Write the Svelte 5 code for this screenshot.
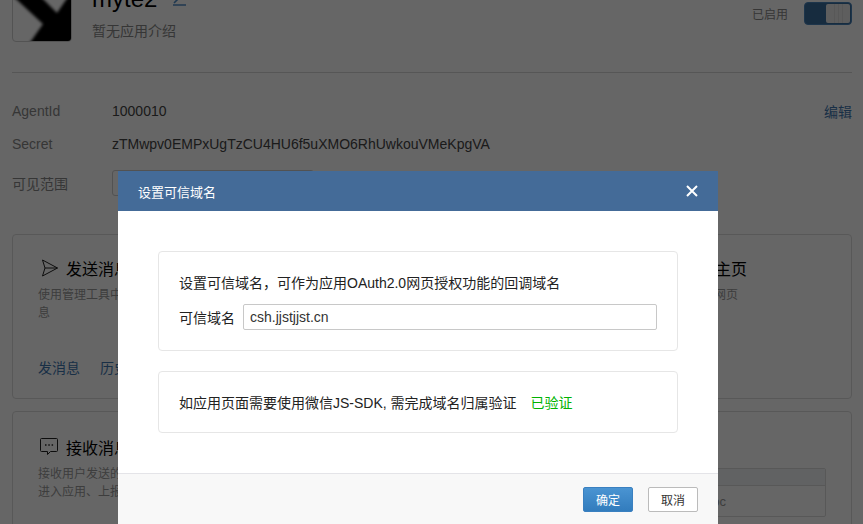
<script>
	const infoRows = [
		{ label: 'AgentId', value: '1000010' },
		{ label: 'Secret', value: 'zTMwpv0EMPxUgTzCU4HU6f5uXMO6RhUwkouVMeKpgVA' }
	];
</script>

<div class="page">
	<header class="app-head">
		<div class="logo">
			<svg viewBox="0 0 60 72" width="60" height="72">
				<defs>
					<filter id="soft"><feGaussianBlur stdDeviation="1.5" /></filter>
				</defs>
				<polygon filter="url(#soft)" points="-3,24 3,28 31,54 17,74 64,74 64,24 58,24 45,43 26,24" fill="#000" />
			</svg>
		</div>
		<div class="app-text">
			<div class="app-name">
				<span>myte2</span>
				<svg class="pen" viewBox="0 0 14 14" width="14" height="14">
					<path d="M0 13h13M12 0L1 11" fill="none" stroke="#4f8cc8" stroke-width="1.6" />
				</svg>
			</div>
			<p class="app-desc">暂无应用介绍</p>
		</div>
		<div class="switch-wrap">
			<span>已启用</span>
			<div class="switch"><i></i></div>
		</div>
	</header>

	<section class="info">
		{#each infoRows as row, i}
			<div class="row">
				<span class="label">{row.label}</span>
				<span class="value">{row.value}</span>
				{#if i === 0}<a class="edit" href="#edit">编辑</a>{/if}
			</div>
		{/each}
		<div class="row range">
			<span class="label">可见范围</span>
			<span class="range-box"></span>
		</div>
	</section>

	<section class="card first">
		<div class="col">
			<h3>
				<svg viewBox="0 0 18 18" width="18" height="18">
					<path d="M2.5 1l15 8-15 8 2.5-8z M5 9h12.5" fill="none" stroke="#222" stroke-width="1" />
				</svg>
				发送消息
			</h3>
			<p>使用管理工具中的消息发送功能向用户发送消<br />息</p>
			<div class="links"><a href="#send">发消息</a><a href="#history">历史消息</a></div>
		</div>
		<div class="col right">
			<h3 class="home">应用主页</h3>
			<p>进入应用时打开网页</p>
		</div>
	</section>

	<section class="card second">
		<div class="col">
			<h3>
				<svg viewBox="0 0 18 18" width="18" height="18">
					<path d="M1.5 0.5h15a1 1 0 0 1 1 1v11a1 1 0 0 1-1 1h-6l-3 3v-3h-6a1 1 0 0 1-1-1v-11a1 1 0 0 1 1-1z" fill="none" stroke="#222" stroke-width="1" />
					<path d="M5 7h1.5M8.3 7h1.5M11.6 7h1.5" stroke="#222" stroke-width="1.5" />
				</svg>
				接收消息
			</h3>
			<p>接收用户发送的消息和事件<br />进入应用、上报地理位置</p>
		</div>
		<div class="col right">
			<div class="mini-table">
				<div class="mini-head"></div>
				<div class="mini-cell">doc</div>
			</div>
		</div>
	</section>
</div>

<div class="mask"></div>

<div class="modal">
	<div class="modal-head">
		<span>设置可信域名</span>
		<svg viewBox="0 0 14 14" width="14" height="14">
			<path d="M2 2l10 10M12 2L2 12" stroke="#fff" stroke-width="2" />
		</svg>
	</div>
	<div class="modal-body">
		<div class="box">
			<p>设置可信域名，可作为应用OAuth2.0网页授权功能的回调域名</p>
			<label>
				<span>可信域名</span>
				<input type="text" value="csh.jjstjjst.cn" />
			</label>
		</div>
		<div class="box verify">
			<span>如应用页面需要使用微信JS-SDK, 需完成域名归属验证</span>
			<em>已验证</em>
		</div>
	</div>
	<div class="modal-foot">
		<button class="primary">确定</button>
		<button>取消</button>
	</div>
</div>

<style>
	:global(body) {
		margin: 0;
		height: 524px;
		overflow: hidden;
		background: #fff;
		font-family: 'Liberation Sans', 'Noto Sans CJK SC', sans-serif;
		font-size: 14px;
	}

	.page {
		height: 524px;
		padding: 0 11px 0 12px;
		box-sizing: border-box;
		overflow: hidden;
	}

	/* Header is scrolled partly out of view */
	.app-head {
		display: flex;
		margin-top: -30px;
		height: 103px;
		box-sizing: border-box;
		border-bottom: 1px solid #d8d8d8;
	}

	.logo {
		width: 60px;
		height: 72px;
		border: 1px solid #d0d0d0;
		border-radius: 4px;
		box-sizing: border-box;
		overflow: hidden;
		background: #fff;
	}

	.logo svg {
		display: block;
		margin: -1px;
	}

	.app-text {
		margin-left: 20px;
		flex: 1;
	}

	.app-name {
		display: flex;
		align-items: center;
		gap: 16px;
		height: 24px;
		margin-top: 17px;
		font-size: 24px;
		color: #000;
		line-height: 24px;
	}

	.app-desc {
		margin: 11px 0 0;
		color: #888;
		line-height: 18px;
	}

	.switch-wrap {
		display: flex;
		align-items: center;
		gap: 16px;
		height: 24px;
		margin-top: 31px;
		color: #888;
		font-size: 12px;
	}

	.switch {
		width: 48px;
		height: 23px;
		box-sizing: border-box;
		border-radius: 4px;
		background: #3a6f9f;
		border: 1px solid #4a84bc;
		padding: 1px;
		display: flex;
		justify-content: flex-end;
	}

	.switch i {
		width: 24px;
		border-radius: 2px;
		background: linear-gradient(90deg, transparent 8px, #ddd 8px, #ddd 9px, transparent 9px, transparent 12px, #ddd 12px, #ddd 13px, transparent 13px, transparent 16px, #ddd 16px, #ddd 17px, transparent 17px), #ececec;
	}

	.info {
		height: 161px;
		padding-top: 21px;
		box-sizing: border-box;
		color: #444;
	}

	.row {
		display: flex;
		align-items: center;
		height: 33px;
	}

	.row.range {
		height: 40px;
		padding-top: 5px;
		box-sizing: border-box;
	}

	.label {
		width: 100px;
		color: #888;
	}

	.edit {
		margin-left: auto;
		color: #3f77b0;
		text-decoration: none;
	}

	.range-box {
		width: 200px;
		height: 24px;
		border: 1px solid #ccc;
		border-radius: 3px;
	}

	.card {
		display: flex;
		justify-content: space-between;
		border: 1px solid #dcdcdc;
		border-radius: 4px;
		padding: 0 25px;
		box-sizing: border-box;
	}

	.first {
		height: 165px;
	}

	.first h3 {
		margin-top: 23px;
	}

	.second {
		height: 140px;
		margin-top: 12px;
	}

	.second p {
		margin-top: 6px;
	}

	.col {
		width: 330px;
	}

	h3 {
		display: flex;
		align-items: center;
		gap: 8px;
		margin: 25px 0 0;
		height: 20px;
		font-size: 16px;
		font-weight: 400;
		color: #000;
	}

	h3 svg {
		margin-left: 2px;
	}

	h3.home {
		padding-left: 53px;
	}

	.col p {
		margin: 8px 0 0;
		font-size: 12px;
		line-height: 18px;
		color: #999;
	}

	.links {
		display: flex;
		gap: 20px;
		margin-top: 36px;
		line-height: 20px;
	}

	.links a {
		color: #3f77b0;
		text-decoration: none;
	}

	.right {
		width: 196px;
	}

	.mini-table {
		margin-top: 56px;
		height: 49px;
		border: 1px solid #ddd;
		border-radius: 2px;
		box-sizing: border-box;
	}

	.mini-head {
		height: 16px;
		background: #f2f4f8;
		border-bottom: 1px solid #ddd;
	}

	.mini-cell {
		padding-left: 74px;
		font-size: 13px;
		line-height: 31px;
		color: #999;
	}

	.mask {
		position: fixed;
		inset: 0;
		background: rgba(0, 0, 0, 0.6);
	}

	.modal {
		position: fixed;
		left: 118px;
		top: 171px;
		width: 600px;
		height: 380px;
		background: #fff;
		color: #222;
		display: flex;
		flex-direction: column;
	}

	.modal-head {
		display: flex;
		justify-content: space-between;
		align-items: center;
		height: 40px;
		padding: 0 19px 0 20px;
		background: #446b98;
		color: #fff;
		font-size: 13px;
		flex: none;
	}

	.modal-body {
		height: 262px;
		padding: 40px;
		box-sizing: border-box;
		flex: none;
	}

	.box {
		border: 1px solid #e6e6e6;
		border-radius: 4px;
		box-sizing: border-box;
		padding: 0 20px;
	}

	.box:first-child {
		height: 100px;
		padding-top: 22px;
	}

	.box p {
		margin: 0;
		line-height: 18px;
	}

	label {
		display: flex;
		align-items: center;
		gap: 8px;
		margin-top: 12px;
	}

	input {
		width: 414px;
		height: 26px;
		box-sizing: border-box;
		border: 1px solid #c8c8c8;
		border-radius: 2px;
		padding: 0 6px;
		font: inherit;
		color: #333;
		outline: none;
	}

	.verify {
		display: flex;
		align-items: center;
		gap: 14px;
		height: 62px;
		margin-top: 20px;
	}

	.verify em {
		font-style: normal;
		color: #00b300;
	}

	.modal-foot {
		flex: 1;
		display: flex;
		justify-content: flex-end;
		gap: 15px;
		padding: 13px 20px 0 0;
		background: #f8f8f8;
		border-top: 1px solid #e4e4e8;
	}

	button {
		width: 50px;
		height: 25px;
		padding: 0;
		border: 1px solid #bbb;
		border-radius: 2px;
		background: #fff;
		color: #333;
		font: inherit;
		font-size: 12px;
	}

	button.primary {
		border-color: #3a80c0;
		background: linear-gradient(#4a94d2, #327cbd);
		color: #fff;
	}
</style>
